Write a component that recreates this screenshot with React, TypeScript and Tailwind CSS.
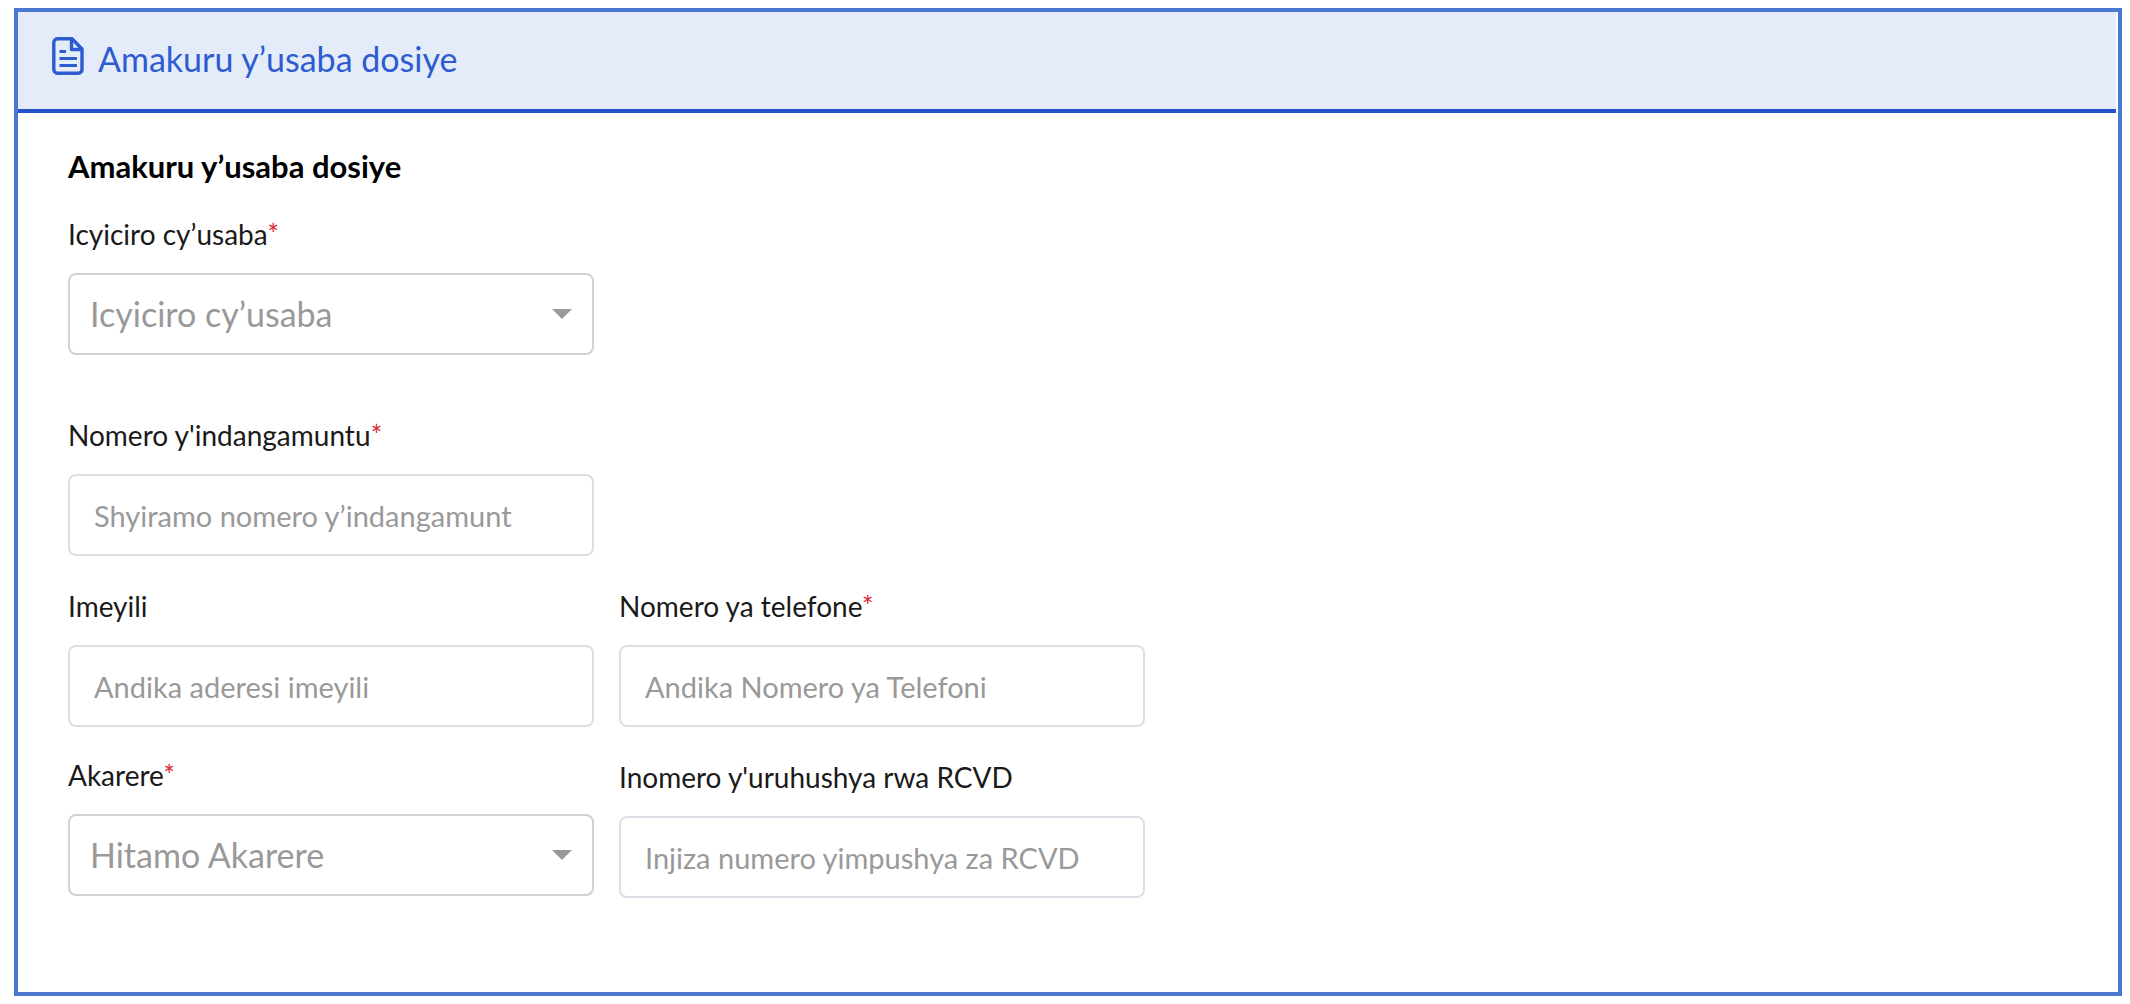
import { useState } from "react";

const labelClass = "block text-[28px] leading-10 text-[#1a1a1a]";
const controlClass =
  "block h-[82px] w-full rounded-lg border-2 bg-white outline-none focus:border-[#2552c8]";

function FileIcon() {
  return (
    <svg width="32" height="38" viewBox="0 0 32 38" fill="none" stroke="currentColor" strokeWidth="3.4" className="shrink-0" aria-hidden="true">
      <path d="M5.5 1.8H20L30 12V32.500a3.700 3.700 0 0 1-3.700 3.700H5.500a3.700 3.700 0 0 1-3.700-3.700V5.500a3.700 3.700 0 0 1 3.700-3.700Z" strokeLinejoin="round" />
      <path d="M19.500 2v10.500H30" strokeLinejoin="round" />
      <path d="M7.500 14.500h6.500M7.500 21.500h17.500M7.500 28.500h17.500" strokeWidth="3" />
    </svg>
  );
}

function Label({ id, text, required }: { id: string; text: string; required?: boolean }) {
  return (
    <label htmlFor={id} className={labelClass}>
      {text}
      {required && <span className="text-[#e02b3c]">*</span>}
    </label>
  );
}

type FieldProps = {
  id: string;
  label: string;
  placeholder: string;
  required?: boolean;
};

function TextField({ id, label, placeholder, required, lookup }: FieldProps & { lookup?: boolean }) {
  const [value, setValue] = useState("");
  const padding = lookup ? "pr-20" : "pr-6";
  return (
    <div>
      <Label id={id} text={label} required={required} />
      <input
        id={id}
        type="text"
        value={value}
        placeholder={placeholder}
        onChange={(e) => setValue(e.target.value)}
        className={`${controlClass} ${padding} mt-[19px] border-[#dadfe6] pl-6 text-[29px] text-[#1a1a1a] placeholder:text-[#999999]`}
      />
    </div>
  );
}

function SelectField({ id, label, placeholder, required }: FieldProps) {
  return (
    <div>
      <Label id={id} text={label} required={required} />
      <div className="relative mt-[19px]">
        <select
          id={id}
          defaultValue=""
          className={`${controlClass} appearance-none border-[#d2d2d2] pr-14 pb-0.5 pl-5 text-[34px] text-[#999999]`}
        >
          <option value="">{placeholder}</option>
        </select>
        <svg width="20" height="10" viewBox="0 0 20 10" className="pointer-events-none absolute top-9 right-[22px] text-[#999999]" aria-hidden="true">
          <path d="M0 0h20L10 10Z" fill="currentColor" />
        </svg>
      </div>
    </div>
  );
}

export default function App() {
  return (
    <div className="flex min-h-screen bg-white px-2 py-2 pl-3.5 font-['Lato',sans-serif]">
      <main className="flex-1 border-4 border-[#4a78d0]">
        <header className="mr-0.5 flex h-[101px] items-start gap-3.5 border-b-4 border-[#2552c8] bg-[#e4ecfa] pt-[25px] pl-[34px] text-[#2f5bd0]">
          <FileIcon />
          <h1 className="text-[34px] leading-[44px]">Amakuru y’usaba dosiye</h1>
        </header>

        <form className="px-[50px] pt-[33px] pb-12" onSubmit={(e) => e.preventDefault()}>
          <h2 className="text-[31px] leading-10 font-bold text-black">Amakuru y’usaba dosiye</h2>

          <div className="mt-7 grid max-w-[1077px] grid-cols-2 gap-x-[25px]">
            <div className="flex flex-col gap-[60px]">
              <SelectField id="category" label="Icyiciro cy’usaba" placeholder="Icyiciro cy’usaba" required />
              <TextField id="national-id" label="Nomero y'indangamuntu" placeholder="Shyiramo nomero y’indangamuntu" required lookup />
            </div>
          </div>

          <div className="mt-[30px] grid max-w-[1077px] grid-cols-2 gap-x-[25px]">
            <div className="flex flex-col gap-7">
              <TextField id="email" label="Imeyili" placeholder="Andika aderesi imeyili" />
              <SelectField id="district" label="Akarere" placeholder="Hitamo Akarere" required />
            </div>
            <div className="flex flex-col gap-[30px]">
              <TextField id="phone" label="Nomero ya telefone" placeholder="Andika Nomero ya Telefoni" required />
              <TextField id="license" label="Inomero y'uruhushya rwa RCVD" placeholder="Injiza numero yimpushya za RCVD" />
            </div>
          </div>
        </form>
      </main>
    </div>
  );
}
